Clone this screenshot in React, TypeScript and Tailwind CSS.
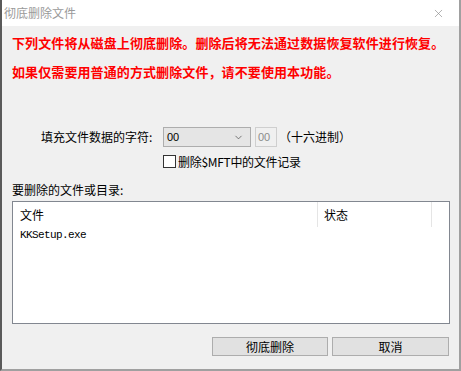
import { ChevronDown, X } from 'lucide-react';

const cjk = "font-['Microsoft_YaHei','Noto_Sans_CJK_SC',sans-serif]";

export default function App() {
    return (
        <div className={`relative w-[461px] h-[371px] flex flex-col border-l-2 border-l-[#5a5a5a] border-r-2 border-r-[#a0a0a0] border-b-2 border-b-[#a0a0a0] bg-[#f0f0f0] text-[12px] text-black overflow-hidden ${cjk}`}>
            {/* title bar */}
            <div className="h-[26px] shrink-0 bg-white flex items-center justify-between pl-[2px] pr-[14px]">
                <span className="text-[#9a9a9a] text-[12px] leading-none">彻底删除文件</span>
                <X className="w-[13px] h-[13px] text-[#8a8a8a]" strokeWidth={1.2} />
            </div>

            {/* warning */}
            <div className="pt-[2px] pl-[10px] text-[13px] tracking-[0.1px] leading-[29px] font-bold text-[#ff0000]">
                <p>下列文件将从磁盘上彻底删除。删除后将无法通过数据恢复软件进行恢复。</p>
                <p>如果仅需要用普通的方式删除文件，请不要使用本功能。</p>
            </div>

            {/* fill char row */}
            <div className="mt-[41px] h-[20px] flex items-center">
                <span className="pl-[39px] w-[161px] leading-none">填充文件数据的字符:</span>
                <div className="w-[88px] h-[20px] border border-[#adadad] bg-[#e5e5e5] flex items-center justify-between pl-[3px] pr-[6px]">
                    <span className="font-['Liberation_Sans',sans-serif] text-[11px]">00</span>
                    <ChevronDown className="w-[11px] h-[11px] text-[#444]" strokeWidth={1.5} />
                </div>
                <div className="ml-[4px] w-[22px] h-[20px] border border-[#cfcfcf] bg-[#f0f0f0] flex items-center pl-[2px] text-[#8c8c8c] font-['Liberation_Sans',sans-serif] text-[11px]">
                    00
                </div>
                <span className="ml-[2px] leading-none">（十六进制）</span>
            </div>

            {/* checkbox row */}
            <div className="mt-[8px] pl-[161px] flex items-center gap-[2px] h-[13px]">
                <div className="w-[13px] h-[13px] border border-[#333] bg-white" />
                <span className="leading-none tracking-[-0.3px]">删除$MFT中的文件记录</span>
            </div>

            {/* list label */}
            <div className="mt-[16px] pl-[10px] leading-none">要删除的文件或目录:</div>

            {/* list */}
            <div className="mt-[5px] ml-[10px] w-[438px] h-[123px] border border-[#828790] bg-white flex flex-col">
                <div className="h-[25px] flex items-center">
                    <div className="w-[305px] h-full border-r border-[#e5e5e5] pl-[7px] flex items-center">文件</div>
                    <div className="w-[114px] h-full border-r border-[#e5e5e5] pl-[6px] flex items-center">状态</div>
                </div>
                <div className="pl-[7px] mt-[3px] font-['Liberation_Mono',monospace] text-[11px] tracking-[-0.6px] leading-none">
                    KKSetup.exe
                </div>
            </div>

            {/* buttons */}
            <div className="mt-[13px] flex justify-end gap-[4px] pr-[10px]">
                <button className="w-[116px] h-[19px] border border-[#adadad] bg-[#e1e1e1] leading-none">彻底删除</button>
                <button className="w-[117px] h-[19px] border border-[#adadad] bg-[#e1e1e1] leading-none">取消</button>
            </div>
        </div>
    );
}
